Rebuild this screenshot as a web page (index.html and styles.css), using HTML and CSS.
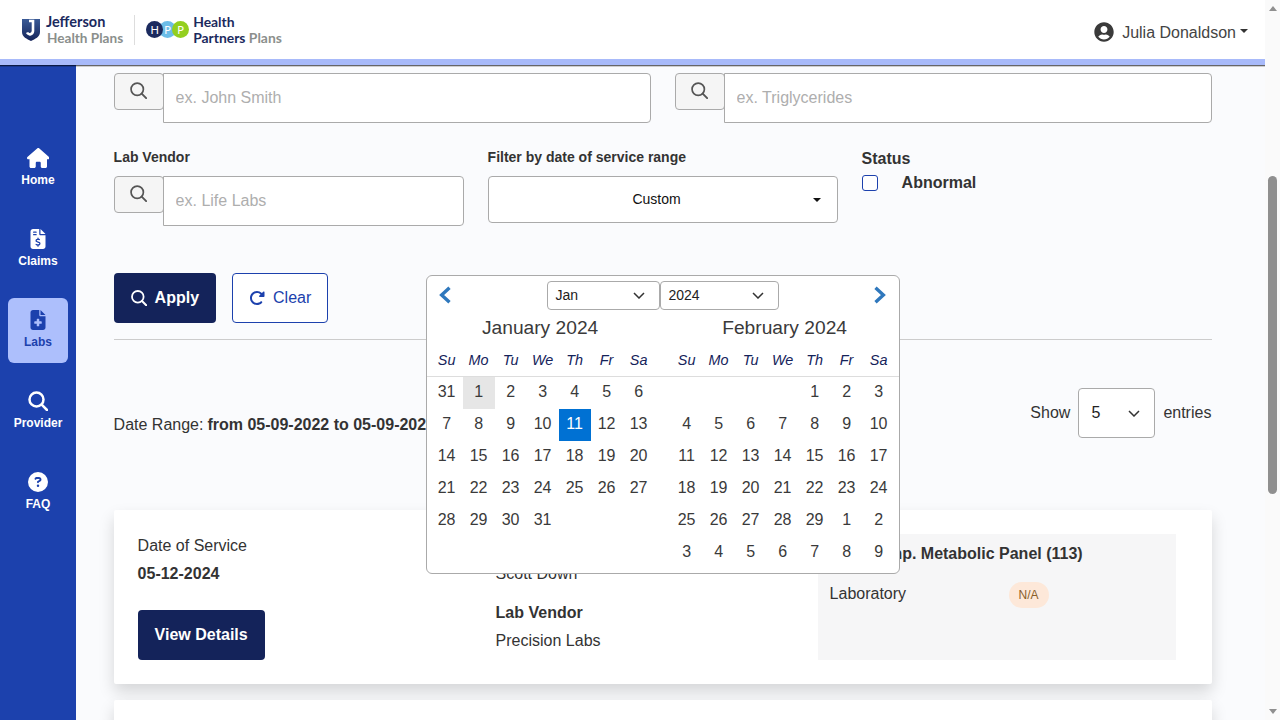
FILE: index.html
```html
<!DOCTYPE html>
<html lang="en">
<head>
<meta charset="utf-8">
<title>Labs</title>
<link rel="stylesheet" href="styles.css">
</head>
<body>
<div class="app">
  <div class="page">
    <header class="topbar">
      <div class="logos">
        <div class="logo-jeff">
          <svg class="shield" viewBox="0 0 18 22"><defs><linearGradient id="sg" x1="0" y1="0" x2="0" y2="1"><stop offset="0" stop-color="#3a5a96"/><stop offset="1" stop-color="#14235a"/></linearGradient></defs><path fill="url(#sg)" d="M0 0h18v13c0 5-5 7-9 9-4-2-9-4-9-9z"/><path d="M7 2h4v10c0 2-1.500 3-3 3.500-1.500-.5-2.500-1-3-2" fill="none" stroke="#fff" stroke-width="2.600"/></svg>
          <div class="logo-text"><span class="navy-word">Jefferson</span><span class="gray-word small-word">Health Plans</span></div>
        </div>
        <div class="logo-divider"></div>
        <div class="logo-hpp">
          <div class="dots"><span class="dot dot-h">H</span><span class="dot dot-p1">P</span><span class="dot dot-p2">P</span></div>
          <div class="logo-text logo-text-hpp"><span class="navy-word">Health</span><span><span class="navy-word">Partners</span> <span class="gray-word">Plans</span></span></div>
        </div>
      </div>
      <div class="user">
        <svg class="user-icon" viewBox="0 0 496 512"><path fill="currentColor" d="M248 8C111 8 0 119 0 256s111 248 248 248 248-111 248-248S385 8 248 8zm0 96c48.600 0 88 39.400 88 88s-39.400 88-88 88-88-39.400-88-88 39.400-88 88-88zm0 344c-58.700 0-111.300-26.600-146.500-68.200 18.800-35.400 55.600-59.800 98.500-59.800 2.400 0 4.800.4 7.100 1.100 13 4.200 26.600 6.900 40.900 6.900 14.300 0 28-2.700 40.900-6.900 2.300-.7 4.700-1.100 7.100-1.100 42.900 0 79.700 24.400 98.500 59.800C359.300 421.400 306.700 448 248 448z"/></svg>
        <span class="user-name">Julia Donaldson</span><i class="caret caret-user"></i>
      </div>
    </header>
    <div class="body">
      <nav class="sidebar">
        <a class="nav-item"><svg class="nav-icon icon-home" viewBox="0 0 576 512"><path fill="currentColor" d="M575.800 255.500c0 18-15 32.100-32 32.100h-32l.7 160.200c0 2.700-.2 5.400-.5 8.100V472c0 22.100-17.900 40-40 40H456c-1.100 0-2.200 0-3.300-.1c-1.400 .1-2.800 .1-4.200 .1H416 392c-22.100 0-40-17.900-40-40V448 384c0-17.700-14.300-32-32-32H256c-17.700 0-32 14.300-32 32v64 24c0 22.100-17.900 40-40 40H160 128.100c-1.500 0-3-.1-4.500-.2c-1.200 .1-2.400 .2-3.600 .2H104c-22.100 0-40-17.900-40-40V360c0-.9 0-1.900 .1-2.800V287.600H32c-18 0-32-14-32-32.100c0-9 3-17 10-24L266.400 8c7-7 15-8 22-8s15 2 21 7L564.800 231.500c8 7 12 15 11 24z"/></svg><span>Home</span></a>
        <a class="nav-item"><svg class="nav-icon" viewBox="0 0 384 512"><path fill="currentColor" d="M64 0C28.700 0 0 28.700 0 64V448c0 35.300 28.700 64 64 64H320c35.300 0 64-28.700 64-64V160H256c-17.700 0-32-14.300-32-32V0H64zM256 0V128H384L256 0zM64 80c0-8.800 7.200-16 16-16h64c8.800 0 16 7.200 16 16s-7.200 16-16 16H80c-8.800 0-16-7.200-16-16zm0 64c0-8.800 7.200-16 16-16h64c8.800 0 16 7.200 16 16s-7.200 16-16 16H80c-8.800 0-16-7.200-16-16zm128 72c8.800 0 16 7.200 16 16v17.300c8.500 1.200 16.700 3.100 24.100 5.100c8.500 2.300 13.600 11 11.300 19.600s-11 13.600-19.600 11.300c-11.100-3-22-5.200-32.100-5.300c-8.400-.1-17.400 1.800-23.600 5.500c-5.700 3.400-8.100 7.300-8.100 12.800c0 3.700 1.300 6.500 7.300 10.100c6.900 4.100 16.600 7.100 29.200 10.900l.5 .1 0 0 0 0c11.300 3.400 25.300 7.600 36.300 14.600c12.100 7.600 22.400 19.700 22.700 38.200c.3 19.300-9.600 33.300-22.900 41.600c-7.700 4.800-16.400 7.600-25.100 9.100V440c0 8.800-7.200 16-16 16s-16-7.200-16-16V422.200c-11.200-2.100-21.700-5.700-30.900-8.900h0c-2.100-.7-4.200-1.400-6.200-2.100c-8.400-2.800-12.900-11.900-10.100-20.200s11.900-12.900 20.200-10.100c2.500 .8 4.800 1.600 7.100 2.400l0 0 0 0 0 0c13.600 4.600 24.600 8.400 36.300 8.700c9.100 .3 17.900-1.700 23.700-5.300c5.100-3.200 7.900-7.300 7.800-14c-.1-4.600-1.800-7.800-7.700-11.600c-6.800-4.300-16.500-7.400-29-11.200l-1.600-.5 0 0c-11-3.300-24.300-7.300-34.800-13.700c-12-7.200-22.600-18.900-22.700-37.300c-.1-19.400 10.800-32.800 23.800-40.500c7.500-4.400 15.800-7.200 24.100-8.700V232c0-8.800 7.200-16 16-16z"/></svg><span>Claims</span></a>
        <a class="nav-item nav-active"><svg class="nav-icon" viewBox="0 0 384 512"><path fill="currentColor" d="M64 0C28.700 0 0 28.700 0 64V448c0 35.300 28.700 64 64 64H320c35.300 0 64-28.700 64-64V160H256c-17.700 0-32-14.300-32-32V0H64zM256 0V128H384L256 0zM160 240c0-8.800 7.200-16 16-16h32c8.800 0 16 7.200 16 16v48h48c8.800 0 16 7.200 16 16v32c0 8.800-7.200 16-16 16H224v48c0 8.800-7.200 16-16 16H176c-8.800 0-16-7.200-16-16V352H112c-8.800 0-16-7.200-16-16V304c0-8.800 7.200-16 16-16h48V240z"/></svg><span>Labs</span></a>
        <a class="nav-item"><svg class="nav-icon" viewBox="0 0 20 20"><circle cx="8.500" cy="8.500" r="7" fill="none" stroke="currentColor" stroke-width="2.500"/><path d="M13.700 13.700L19 19" fill="none" stroke="currentColor" stroke-width="2.500" stroke-linecap="round"/></svg><span>Provider</span></a>
        <a class="nav-item"><svg class="nav-icon" viewBox="0 0 512 512"><path fill="currentColor" d="M256 512A256 256 0 1 0 256 0a256 256 0 1 0 0 512zM169.800 165.300c7.900-22.300 29.100-37.300 52.800-37.300h58.300c34.900 0 63.100 28.300 63.100 63.100c0 22.600-12.100 43.500-31.700 54.800L280 264.400c-.2 13-10.900 23.600-24 23.600c-13.300 0-24-10.700-24-24V250.500c0-8.600 4.600-16.500 12.100-20.800l44.300-25.400c4.700-2.700 7.600-7.700 7.600-13.100c0-8.400-6.800-15.100-15.100-15.100H222.600c-3.400 0-6.400 2.100-7.500 5.300l-.4 1.200c-4.400 12.500-18.200 19-30.600 14.600s-19-18.200-14.600-30.600l.4-1.200zM224 352a32 32 0 1 1 64 0 32 32 0 1 1 -64 0z"/></svg><span>FAQ</span></a>
      </nav>
      <main class="main">
        <div class="row-top">
          <div class="search-group">
            <span class="addon"><svg class="search-svg" viewBox="0 0 16 16"><circle cx="6.800" cy="6.800" r="5.800" fill="none" stroke="currentColor" stroke-width="1.600"/><path d="M11 11l4.200 4.200" stroke="currentColor" stroke-width="1.800" stroke-linecap="round"/></svg></span>
            <input class="text-input" placeholder="ex. John Smith">
          </div>
          <div class="search-group">
            <span class="addon"><svg class="search-svg" viewBox="0 0 16 16"><circle cx="6.800" cy="6.800" r="5.800" fill="none" stroke="currentColor" stroke-width="1.600"/><path d="M11 11l4.200 4.200" stroke="currentColor" stroke-width="1.800" stroke-linecap="round"/></svg></span>
            <input class="text-input" placeholder="ex. Triglycerides">
          </div>
        </div>
        <div class="row-filters">
          <div class="field">
            <label class="field-label">Lab Vendor</label>
            <div class="search-group">
              <span class="addon"><svg class="search-svg" viewBox="0 0 16 16"><circle cx="6.800" cy="6.800" r="5.800" fill="none" stroke="currentColor" stroke-width="1.600"/><path d="M11 11l4.200 4.200" stroke="currentColor" stroke-width="1.800" stroke-linecap="round"/></svg></span>
              <input class="text-input" placeholder="ex. Life Labs">
            </div>
          </div>
          <div class="field">
            <label class="field-label">Filter by date of service range</label>
            <div class="range-select"><span class="range-value">Custom</span><i class="caret caret-dark"></i></div>
          </div>
          <div class="status">
            <div class="status-title">Status</div>
            <div class="status-option"><span class="checkbox"></span><span>Abnormal</span></div>
          </div>
        </div>
        <div class="row-actions">
          <button class="btn btn-primary"><svg class="btn-icon" viewBox="0 0 16 16"><circle cx="6.800" cy="6.800" r="5.800" fill="none" stroke="currentColor" stroke-width="1.800"/><path d="M11 11l4.200 4.200" stroke="currentColor" stroke-width="2" stroke-linecap="round"/></svg>Apply</button>
          <button class="btn btn-outline"><svg class="btn-icon" viewBox="0 0 512 512"><path fill="currentColor" d="M463.500 224H472c13.300 0 24-10.700 24-24V72c0-9.700-5.800-18.500-14.800-22.200s-19.300-1.700-26.200 5.200L413.400 96.600c-87.600-86.500-228.700-86.200-315.800 1c-87.500 87.500-87.500 229.300 0 316.800s229.300 87.500 316.800 0c12.500-12.500 12.500-32.800 0-45.300s-32.800-12.500-45.300 0c-62.500 62.500-163.800 62.500-226.300 0s-62.500-163.800 0-226.300c62.200-62.200 162.700-62.500 225.300-1L327 183c-6.900 6.900-8.900 17.200-5.200 26.200s12.500 14.800 22.200 14.800H463.500z"/></svg>Clear</button>
        </div>
        <hr class="divider">
        <div class="row-range">
          <div class="range-text">Date Range: <b class="range-value-text">from 05-09-2022 to 05-09-2024</b></div>
          <div class="entries">
            <span>Show</span>
            <div class="entries-select"><span>5</span><svg class="chev" viewBox="0 0 12 7"><path d="M1 1l5 5 5-5" fill="none" stroke="currentColor" stroke-width="1.500"/></svg></div>
            <span>entries</span>
          </div>
        </div>
        <section class="card">
          <div class="card-col">
            <div class="line">Date of Service</div>
            <div class="line strong">05-12-2024</div>
            <button class="btn btn-primary btn-details">View Details</button>
          </div>
          <div class="card-col">
            <div class="line strong">Ordering Provider</div>
            <div class="line">Scott Down</div>
            <div class="line strong vendor-label">Lab Vendor</div>
            <div class="line">Precision Labs</div>
          </div>
          <div class="panel">
            <div class="panel-title">Comp. Metabolic Panel (113)</div>
            <div class="panel-row"><span class="panel-name">Laboratory</span><span class="pill">N/A</span></div>
          </div>
        </section>
        <section class="card card-next"></section>
      </main>
    </div>
  </div>
  <div class="scrollbar">
    <i class="sb-up"></i>
    <div class="sb-track"><div class="sb-thumb"></div></div>
    <i class="sb-down"></i>
  </div>
  <div class="datepicker">
    <div class="dp-nav">
      <svg class="dp-arrow" viewBox="0 0 12 16"><path d="M10 1.500L3 8l7 6.500" fill="none" stroke="currentColor" stroke-width="3"/></svg>
      <div class="dp-selects">
        <div class="dp-select dp-month"><span>Jan</span><svg class="chev" viewBox="0 0 12 7"><path d="M1 1l5 5 5-5" fill="none" stroke="currentColor" stroke-width="1.500"/></svg></div>
        <div class="dp-select dp-year"><span>2024</span><svg class="chev" viewBox="0 0 12 7"><path d="M1 1l5 5 5-5" fill="none" stroke="currentColor" stroke-width="1.500"/></svg></div>
      </div>
      <svg class="dp-arrow" viewBox="0 0 12 16"><path d="M2 1.500L9 8l-7 6.500" fill="none" stroke="currentColor" stroke-width="3"/></svg>
    </div>
    <div class="dp-titles"><div class="dp-title dp-title-a">January 2024</div><div class="dp-title dp-title-b">February 2024</div></div>
    <div class="dp-weekrow">
      <div class="dp-grid dp-week"><span>Su</span><span>Mo</span><span>Tu</span><span>We</span><span>Th</span><span>Fr</span><span>Sa</span></div>
      <div class="dp-grid dp-week"><span>Su</span><span>Mo</span><span>Tu</span><span>We</span><span>Th</span><span>Fr</span><span>Sa</span></div>
    </div>
    <div class="dp-months">
      <div class="dp-grid dp-days">
        <span>31</span><span class="day-hover">1</span><span>2</span><span>3</span><span>4</span><span>5</span><span>6</span>
        <span>7</span><span>8</span><span>9</span><span>10</span><span class="day-selected">11</span><span>12</span><span>13</span>
        <span>14</span><span>15</span><span>16</span><span>17</span><span>18</span><span>19</span><span>20</span>
        <span>21</span><span>22</span><span>23</span><span>24</span><span>25</span><span>26</span><span>27</span>
        <span>28</span><span>29</span><span>30</span><span>31</span><span></span><span></span><span></span>
      </div>
      <div class="dp-grid dp-days">
        <span></span><span></span><span></span><span></span><span>1</span><span>2</span><span>3</span>
        <span>4</span><span>5</span><span>6</span><span>7</span><span>8</span><span>9</span><span>10</span>
        <span>11</span><span>12</span><span>13</span><span>14</span><span>15</span><span>16</span><span>17</span>
        <span>18</span><span>19</span><span>20</span><span>21</span><span>22</span><span>23</span><span>24</span>
        <span>25</span><span>26</span><span>27</span><span>28</span><span>29</span><span>1</span><span>2</span>
        <span>3</span><span>4</span><span>5</span><span>6</span><span>7</span><span>8</span><span>9</span>
      </div>
    </div>
  </div>
</div>
</body>
</html>
```
FILE: styles.css
```css
* { box-sizing: border-box; }
html, body { margin: 0; height: 100%; overflow: hidden; }
body { font-family: "Liberation Sans", Arial, sans-serif; font-size: 16px; color: #333; background: #fafbfd; }
.app { position: relative; display: flex; width: 1280px; height: 720px; overflow: hidden; }
.page { width: 1265px; height: 720px; display: flex; flex-direction: column; }

/* header */
.topbar { position: relative; z-index: 2; flex: none; height: 65px; background: #fff; border-bottom: 6px solid #a8bafa; box-shadow: 0 1px 0 rgba(0,0,0,.5), 0 2px 0 rgba(0,0,0,.18); display: flex; align-items: center; justify-content: space-between; padding: 0 17px 0 22px; }
.logos { display: flex; align-items: center; }
.logo-jeff, .logo-hpp { display: flex; align-items: center; }
.shield { width: 18px; height: 22px; margin-right: 6px; }
.logo-text { display: flex; flex-direction: column; font-family: Lato, "Liberation Sans", sans-serif; font-size: 14.500px; line-height: 16px; font-weight: 700; white-space: nowrap; }
.logo-text-hpp { font-size: 13.900px; }
.small-word { font-size: 13.600px; margin-left: 1px; }
.navy-word { color: #1b2a5e; }
.gray-word { color: #8b8f8c; }
.logo-divider { width: 1px; height: 30px; background: #ddd; margin: 0 11px 0 11px; }
.dots { display: flex; margin-right: 4px; }
.dot { width: 17px; height: 17px; border-radius: 50%; display: flex; align-items: center; justify-content: center; font-family: Lato, sans-serif; font-size: 11px; color: #fff; margin-right: -4px; }
.dot:last-child { margin-right: 0; }
.dot-h { background: #1b2a5e; position: relative; z-index: 1; }
.dot-p1 { background: #6cbde8; }
.dot-p2 { background: #93cf1f; position: relative; z-index: 1; }
.user { display: flex; align-items: center; color: #444; margin-top: 5px; }
.user-icon { width: 20px; height: 20px; margin-right: 8px; color: #3a3a3a; }
.user-name { margin-top: 2px; }
.caret { display: inline-block; width: 0; height: 0; border-left: 4px solid transparent; border-right: 4px solid transparent; border-top: 4px solid #333; }
.caret-user { margin-left: 4px; margin-top: -2px; }
.caret-dark { border-top-color: #111; }

/* body */
.body { flex: 1; display: flex; min-height: 0; }
.sidebar { width: 76px; flex: none; background: #1c41ad; padding: 71px 8px 0; display: flex; flex-direction: column; gap: 16px; }
.nav-item { height: 65px; border-radius: 6px; padding-top: 12px; display: flex; flex-direction: column; align-items: center; color: #fff; font-size: 12px; font-weight: 700; line-height: 14px; }
.nav-icon { height: 20px; width: 20px; margin-bottom: 5px; }
.icon-home { width: 22.500px; }
.nav-active { background: #adbffc; color: #1c41ad; }

/* main */
.main { flex: 1; min-width: 0; padding: 8px 53px 0 37.600px; overflow: hidden; }
.row-top { display: grid; grid-template-columns: 537px 537px; gap: 24px; }
.search-group { display: flex; align-items: flex-start; }
.addon { width: 50px; height: 37px; flex: none; margin-right: -1px; background: #f5f5f5; border: 1px solid #aaa; border-radius: 4px; display: flex; align-items: center; justify-content: center; color: #555; padding: 0 1px 2px 0; }
.search-svg { width: 17px; height: 17px; }
.text-input { flex: 1; min-width: 0; height: 50px; border: 1px solid #aaa; border-radius: 0 4px 4px 0; background: #fff; padding: 0 12px; font: inherit; color: #333; outline: none; }
.text-input::placeholder { color: #aeaeae; opacity: 1; }
.row-filters { display: grid; grid-template-columns: 350px 350px 1fr; gap: 24px; margin-top: 26px; height: 77px; }
.field-label { display: block; font-size: 14px; font-weight: 700; line-height: 16px; margin-bottom: 11px; }
.range-select { height: 47px; background: #fff; border: 1px solid #aaa; border-radius: 4px; display: flex; align-items: center; padding: 0 16px 2px 12px; font-size: 14px; color: #111; }
.range-value { flex: 1; text-align: center; }
.caret-dark { margin-top: 2px; }
.status-title { font-weight: 700; line-height: 18px; padding-top: 1px; margin-bottom: 6px; height: 19px; }
.status-option { display: flex; align-items: center; font-weight: 700; line-height: 18px; gap: 24px; }
.checkbox { width: 16px; height: 16px; border: 1px solid #1c41ad; border-radius: 3px; background: #fff; }
.row-actions { display: flex; gap: 16px; margin-top: 47px; }
.btn { height: 50px; border-radius: 4px; font: inherit; display: inline-flex; align-items: center; cursor: pointer; }
.btn-primary { background: #14235a; color: #fff; border: 0; font-weight: 700; padding: 0 17px; gap: 8px; }
.btn-outline { background: #fff; color: #1c41ad; border: 1px solid #1c41ad; padding: 0 16px; gap: 8px; }
.btn-icon { width: 16px; height: 16px; }
.divider { border: 0; border-top: 1px solid #ccc; margin: 16px 0 0; }
.row-range { display: flex; align-items: center; justify-content: space-between; margin-top: 48px; }
.range-text { margin-top: 24px; }
.range-value-text { margin-left: -.5px; }
.entries { display: flex; align-items: center; gap: 8px; padding-right: .6px; }
.entries-select { width: 77px; height: 50px; background: #fff; border: 1px solid #aaa; border-radius: 4px; display: flex; align-items: center; justify-content: space-between; padding: 0 14px 0 12px; color: #222; }
.chev { width: 12px; height: 7px; color: #333; }
.card { background: #fff; border-radius: 2px; box-shadow: 0 8px 16px rgba(0,0,0,.15); margin-top: 72px; padding: 24px 36px 24px 24px; display: grid; grid-template-columns: 358px 322px 358px; height: 174px; }
.card-next { margin-top: 16px; }
.line { line-height: 24px; margin-bottom: 4px; }
.strong { font-weight: 700; }
.btn-details { margin-top: 20px; padding: 0 17px; }
.vendor-label { margin-top: 15px; }
.panel { background: #f6f6f7; height: 126px; padding: 10px 12px; }
.panel-title { font-weight: 700; line-height: 20px; margin-left: 37px; }
.panel-row { display: flex; align-items: flex-start; margin-top: 18px; }
.panel-name { width: 179px; line-height: 20px; margin-top: 2px; }
.pill { width: 40px; height: 26px; border-radius: 13px; background: #fde8d9; color: #8a5f2a; font-size: 12px; display: flex; align-items: center; justify-content: center; }

/* scrollbar */
.scrollbar { width: 15px; flex: none; background: #fafafa; display: flex; flex-direction: column; align-items: center; }
.sb-up { margin-top: 6px; width: 0; height: 0; border-left: 4.500px solid transparent; border-right: 4.500px solid transparent; border-bottom: 5px solid #8f8f8f; }
.sb-track { flex: 1; width: 100%; padding: 165px 3px 0; }
.sb-thumb { height: 318px; background: #8f8f8f; border-radius: 5px; }
.sb-down { margin-bottom: 6px; width: 0; height: 0; border-left: 4.500px solid transparent; border-right: 4.500px solid transparent; border-top: 5px solid #8f8f8f; }

/* date picker popover */
.datepicker { position: absolute; z-index: 3; left: 426px; top: 275px; width: 474px; height: 299px; background: #fff; border: 1px solid #aaa; border-radius: 6px; }
.dp-nav { display: flex; align-items: center; justify-content: space-between; padding: 5px 12px 0 11px; color: #2f78bd; }
.dp-arrow { width: 14px; height: 18px; margin-top: -1px; }
.dp-selects { display: flex; }
.dp-select { height: 29px; background: #fff; border: 1px solid #aaa; border-radius: 4px; display: flex; align-items: center; justify-content: space-between; padding: 0 14px 1px 8px; font-size: 14px; color: #222; }
.dp-month { width: 113px; }
.dp-year { width: 119px; }
.dp-titles { display: grid; grid-template-columns: 224px 224px; column-gap: 16px; padding: 2px 4px 0 3.600px; height: 34px; align-items: center; font-size: 19.200px; color: #3a3a3a; }
.dp-title { text-align: center; }
.dp-title-a { padding-right: 5px; }
.dp-title-b { padding-left: 4px; }
.dp-weekrow, .dp-months { display: grid; grid-template-columns: 224px 224px; column-gap: 16px; padding: 0 4px 0 3.600px; }
.dp-weekrow { border-bottom: 1px solid #ddd; }
.dp-grid { display: grid; grid-template-columns: repeat(7, 32px); }
.dp-week span { height: 32px; display: flex; align-items: center; justify-content: center; font-size: 14.400px; font-style: italic; color: #14235a; }
.dp-days { grid-auto-rows: 32px; }
.dp-days span { display: flex; align-items: center; justify-content: center; color: #3a3a3a; padding-bottom: 2px; }
.dp-days .day-hover { background: #e6e6e6; }
.dp-days .day-selected { background: #0071d3; color: #fff; }
```
